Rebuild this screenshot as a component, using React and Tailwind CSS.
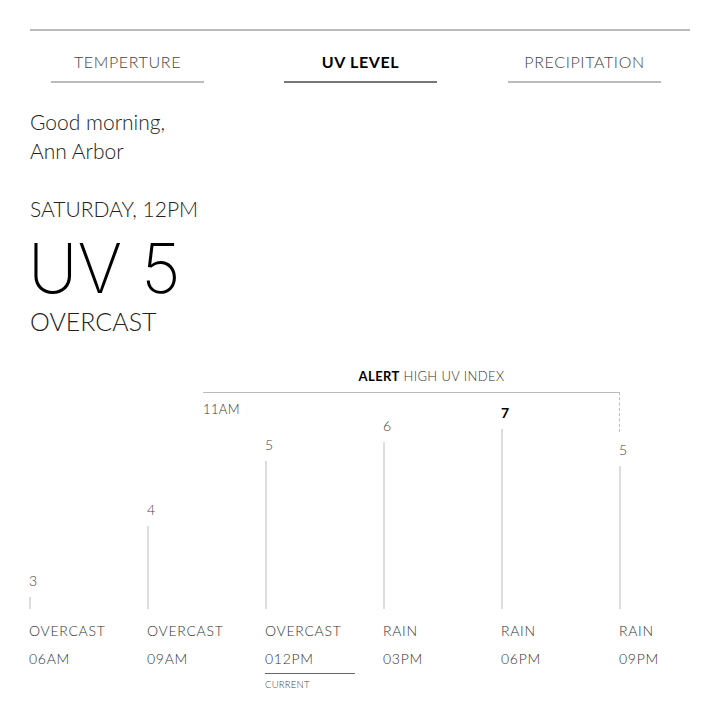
import React from "react";

const tabs = [
  { label: "TEMPERTURE", active: false, gap: "" },
  { label: "UV LEVEL", active: true, gap: "ml-[80px]" },
  { label: "PRECIPITATION", active: false, gap: "ml-[71px]" },
];

const hours = [
  { uv: 3, bar: 12, condition: "OVERCAST", time: "06AM" },
  { uv: 4, bar: 83, condition: "OVERCAST", time: "09AM" },
  { uv: 5, bar: 148, condition: "OVERCAST", time: "012PM", current: true },
  { uv: 6, bar: 167, condition: "RAIN", time: "03PM" },
  { uv: 7, bar: 180, condition: "RAIN", time: "06PM", peak: true },
  { uv: 5, bar: 143, condition: "RAIN", time: "09PM" },
];

const HourColumn = ({ hour }) => (
  <div className="w-[118px] flex flex-col shrink-0">
    <div className="flex flex-col justify-end h-[242px]">
      <span
        className={`text-[14px] leading-none mb-[9px] ${
          hour.peak ? "font-bold text-black" : "font-light text-[#444]"
        }`}
      >
        {hour.uv}
      </span>
      <div className="w-[2px] bg-[#dddddd]" style={{ height: hour.bar }} />
    </div>
    <span className="mt-[15px] text-[14px] leading-none font-light tracking-[0.05em] text-[#333]">
      {hour.condition}
    </span>
    <span className="mt-[14px] text-[14px] leading-none font-light tracking-[0.05em] text-[#333]">
      {hour.time}
    </span>
    {hour.current && (
      <div className="mt-[7px] w-[90px] border-t border-[#666] pt-[6px]">
        <span className="block text-[9.5px] leading-none font-light text-[#444] tracking-wide">
          CURRENT
        </span>
      </div>
    )}
  </div>
);

export default function App() {
  return (
    <div className="w-[720px] h-[720px] bg-white overflow-hidden font-['Lato','Liberation_Sans',sans-serif] text-[#222]">
      <div className="mx-[30px] mt-[29px] h-[2px] bg-[#bbbbbb]" />

      {/* Tabs */}
      <div className="flex pl-[51px] mt-[21px]">
        {tabs.map((tab) => (
          <div key={tab.label} className={`w-[153px] flex flex-col items-center ${tab.gap}`}>
            <span
              className={`text-[16px] leading-[20px] tracking-[0.04em] ${
                tab.active ? "font-bold text-black" : "font-light text-[#444]"
              }`}
            >
              {tab.label}
            </span>
            <div
              className={`mt-[9px] w-full h-[2px] ${
                tab.active ? "bg-[#777777]" : "bg-[#bbbbbb]"
              }`}
            />
          </div>
        ))}
      </div>

      {/* Greeting + current */}
      <div className="px-[30px] mt-[24px]">
        <p className="text-[21px] leading-[29px] font-light">
          Good morning,
          <br />
          Ann Arbor
        </p>
        <p className="mt-[33px] text-[21px] leading-none font-light">SATURDAY, 12PM</p>
        <p className="mt-[21px] -ml-[2px] font-['Inter','Lato',sans-serif] text-[68px] leading-[56px] font-extralight text-black">
          UV 5
        </p>
        <p className="mt-[13px] text-[25px] leading-none font-light">OVERCAST</p>
      </div>

      {/* Chart */}
      <div className="relative mt-[33px]">
        <div className="absolute left-[203px] top-[3px] w-[417px]">
          <p className="text-center pl-[40px] text-[13px] leading-none tracking-[0.03em] text-[#333]">
            <span className="font-bold text-black">ALERT</span>{" "}
            <span className="font-light">HIGH UV INDEX</span>
          </p>
          <div className="mt-[9px] h-[40px] border-t border-r border-dashed border-[#bbbbbb] [border-top-style:solid]" />
          <span className="absolute left-0 top-[33px] text-[13px] leading-none font-light tracking-[0.03em] text-[#333]">
            11AM
          </span>
        </div>
        <div className="flex pl-[29px]">
          {hours.map((hour) => (
            <HourColumn key={hour.time} hour={hour} />
          ))}
        </div>
      </div>
    </div>
  );
}
